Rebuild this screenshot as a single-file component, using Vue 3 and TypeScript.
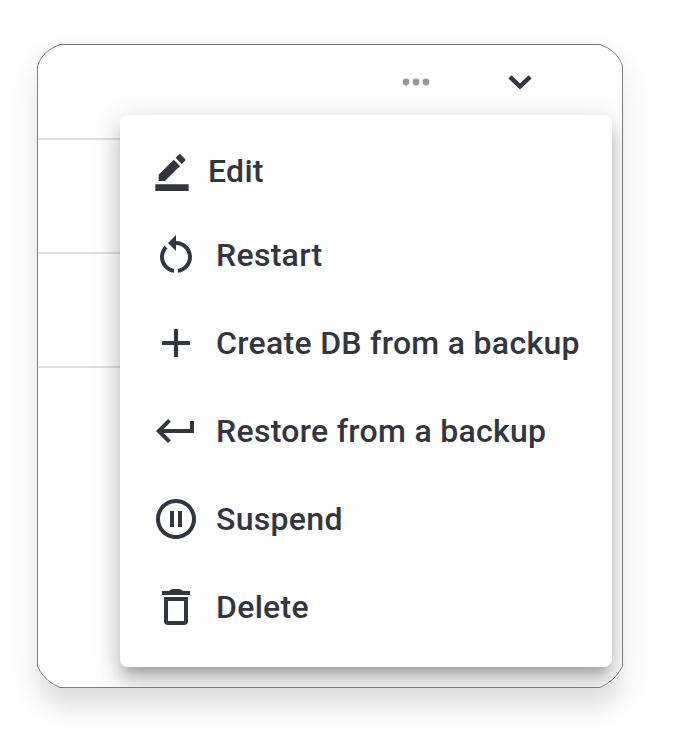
<script setup lang="ts">
interface Action {
  label: string
  path: string
  size: number
}

const actions: Action[] = [
  {
    label: 'Edit',
    size: 40,
    path: 'M22 24H2v-4h20v4zM13.06 5.19l3.75 3.75L7.75 18H4v-3.75l9.06-9.06zm4.82 2.68-3.75-3.75 1.83-1.83c.39-.39 1.02-.39 1.41 0l2.34 2.34c.39.39.39 1.02 0 1.41l-1.83 1.83z',
  },
  {
    label: 'Restart',
    size: 48,
    path: 'M12 5V2L8 6l4 4V7c3.31 0 6 2.69 6 6 0 2.97-2.17 5.43-5 5.91v2.02c3.95-.49 7-3.85 7-7.93 0-4.42-3.58-8-8-8zm-6 8c0-1.65.67-3.15 1.76-4.24L6.34 7.34C4.9 8.79 4 10.79 4 13c0 4.08 3.05 7.44 7 7.93v-2.02c-2.83-.48-5-2.94-5-5.91z',
  },
  { label: 'Create DB from a backup', size: 48, path: 'M19 13h-6v6h-2v-6H5v-2h6V5h2v6h6v2z' },
  {
    label: 'Restore from a backup',
    size: 48,
    path: 'M19 7v4H5.83l3.58-3.59L8 6l-6 6 6 6 1.41-1.41L5.83 13H21V7h-2z',
  },
  {
    label: 'Suspend',
    size: 48,
    path: 'M9 16h2V8H9v8zm3-14C6.48 2 2 6.48 2 12s4.48 10 10 10 10-4.48 10-10S17.52 2 12 2zm0 18c-4.41 0-8-3.59-8-8s3.59-8 8-8 8 3.59 8 8-3.59 8-8 8zm1-4h2V8h-2v8z',
  },
  {
    label: 'Delete',
    size: 48,
    path: 'M5 4h3.6Q9.3 3 10.4 3h3.2q1.1 0 1.8 1H19v2H5V4zM6 7h12v12q0 2-2 2H8q-2 0-2-2V7zm2 2v10h8V9H8z',
  },
]
</script>

<template>
  <main class="page">
    <section class="card">
      <div class="surface">
        <header class="toolbar">
          <svg class="dots" viewBox="0 0 28 8">
            <circle cx="4" cy="4" r="3.4" />
            <circle cx="14" cy="4" r="3.4" />
            <circle cx="24" cy="4" r="3.4" />
          </svg>
          <svg class="chevron" viewBox="0 0 26 18">
            <path d="M2.900 3.800L13 13.400L23.100 3.800" />
          </svg>
        </header>
        <div class="row"></div>
        <div class="row"></div>
        <div class="row"></div>
        <nav class="menu">
          <button v-for="a in actions" :key="a.label" class="item" :class="{ compact: a.size === 40 }">
            <svg class="icon" :width="a.size" :height="a.size" viewBox="0 0 24 24">
              <path :d="a.path" />
            </svg>
            <span>{{ a.label }}</span>
          </button>
        </nav>
      </div>
      <svg class="outline" viewBox="0 0 586 644">
        <path
          d="M.5 21.5Q5.5 6.5 23 .5H563Q580.5 6.5 585.5 21.5V622.5Q578 637 563 643.5H23Q7 637 .5 622.5Z"
        />
      </svg>
    </section>
  </main>
</template>

<style>
body {
  background: #fff;
}
</style>

<style scoped>
.page {
  box-sizing: border-box;
  width: 674px;
  height: 746px;
  padding: 44px 0 0 37px;
  overflow: hidden;
  font-family: Roboto, sans-serif;
}
.card {
  position: relative;
  width: 586px;
  height: 644px;
  border-radius: 28px;
  box-shadow:
    0 24px 18px -4px rgba(0, 0, 0, 0.05),
    0 15px 30px 2px rgba(0, 0, 0, 0.09);
}
.surface {
  position: relative;
  height: 644px;
  overflow: hidden;
  background: #fff;
  clip-path: path('M0 21.5Q5 6 23 0H563Q581 6 586 21.5V622.5Q578.500 637.500 563 644H23Q6.500 637.500 0 622.500Z');
}
.toolbar {
  box-sizing: border-box;
  display: flex;
  align-items: flex-start;
  height: 94px;
  padding: 29px 0 0 365px;
  gap: 77px;
}
.dots {
  width: 28px;
  height: 8px;
  margin-top: 5px;
  fill: #95969e;
}
.chevron {
  width: 26px;
  height: 18px;
  fill: none;
  stroke: #333640;
  stroke-width: 4.400;
}
.row {
  box-sizing: border-box;
  width: 200px;
  height: 114px;
  border-top: 2px solid #e0e0e0;
}
.menu {
  position: absolute;
  top: 71px;
  left: 83px;
  box-sizing: border-box;
  width: 492px;
  height: 552px;
  padding: 16px 0;
  border-radius: 8px;
  background: #fff;
  box-shadow:
    0 10px 10px -6px rgba(0, 0, 0, 0.2),
    0 16px 20px 2px rgba(0, 0, 0, 0.14),
    0 6px 28px 4px rgba(0, 0, 0, 0.12);
}
.item {
  display: flex;
  align-items: center;
  gap: 16px;
  width: 100%;
  height: 88px;
  padding: 0 32px;
  border: 0;
  background: none;
  color: #333640;
  font: 500 32px/48px Roboto, sans-serif;
  letter-spacing: 0.3px;
  white-space: nowrap;
  text-align: left;
}
.item.compact {
  height: 80px;
}
.icon {
  flex: none;
  fill: #333640;
}
.outline {
  position: absolute;
  inset: 0;
  width: 586px;
  height: 644px;
  fill: none;
  stroke: #7d7d7d;
  stroke-width: 1;
  pointer-events: none;
}
</style>
